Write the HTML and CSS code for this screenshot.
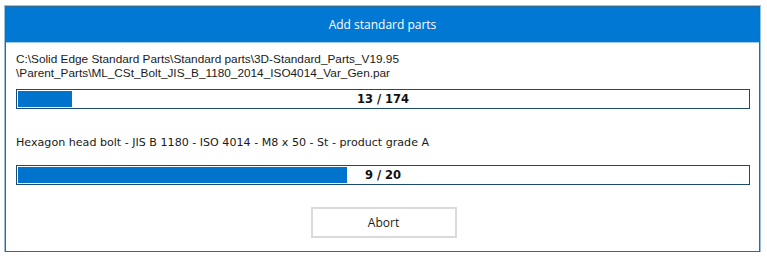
FILE: index.html
```html
<!DOCTYPE html>
<html lang="en">
<head>
  <meta charset="UTF-8" />
  <title>Add standard parts</title>
  <link rel="stylesheet" href="styles.css">
</head>
<body>

  <div class="dialog">
    <div class="dialog-title">Add standard parts</div>
    <div class="dialog-body">
      <p class="file-path">C:\Solid Edge Standard Parts\Standard parts\3D-Standard_Parts_V19.95<br>\Parent_Parts\ML_CSt_Bolt_JIS_B_1180_2014_ISO4014_Var_Gen.par</p>
      <div class="progress">
        <div class="progress-fill" style="width: 7.4%;"></div>
        <span class="progress-label">13 / 174</span>
      </div>

      <p class="part-name">Hexagon head bolt - JIS B 1180 - ISO 4014 - M8 x 50 - St - product grade A</p>
      <div class="progress progress-second">
        <div class="progress-fill" style="width: 45%;"></div>
        <span class="progress-label">9 / 20</span>
      </div>

      <div class="actions">
        <button class="abort-btn">Abort</button>
      </div>
    </div>
  </div>

</body>
</html>
```

FILE: styles.css
```css
body {
  margin: 0;
  background: #fff;
  font-family: "Open Sans", "Noto Sans", sans-serif;
}

.dialog {
  margin: 6px 0 0 5px;
  width: 753px;
  height: 244px;
  border: 1px solid #2d6a96;
  box-shadow: 0 0 0 1px #9cc0da;
  background: #fff;
  display: flex;
  flex-direction: column;
}

.dialog-title {
  height: 35px;
  background: #0078d4;
  border-bottom: 1px solid #9ccbef;
  color: #fff;
  font-size: 12px;
  display: flex;
  align-items: center;
  justify-content: center;
}

.dialog-body {
  padding: 9px 10px 0 10px;
  flex: 1;
}

.file-path {
  margin: 0;
  font-family: "Liberation Sans", Arial, sans-serif;
  font-size: 11.8px;
  line-height: 14px;
  color: #1a1a1a;
}

.part-name {
  margin: 27px 0 0;
  font-family: "DejaVu Sans", sans-serif;
  font-size: 11.1px;
  line-height: 14px;
  color: #1a1a1a;
}

.progress {
  position: relative;
  height: 18px;
  margin-top: 9px;
  border: 1px solid #1d4b70;
  width: 732px;
}

.progress-second {
  margin-top: 15px;
}

.progress-fill {
  height: 16px;
  margin: 1px;
  background: #0074cc;
}

.progress-label {
  position: absolute;
  left: 0;
  right: 0;
  top: 0;
  line-height: 18px;
  text-align: center;
  font-family: "DejaVu Sans", sans-serif;
  font-weight: bold;
  font-size: 11.5px;
  color: #111;
}

.actions {
  display: flex;
  justify-content: center;
  margin-top: 22px;
}

.abort-btn {
  width: 146px;
  height: 31px;
  background: #fff;
  border: 2px solid #dadada;
  font-family: "Open Sans", sans-serif;
  font-size: 12px;
  color: #1a1a1a;
  margin-left: 2px;
}
```
